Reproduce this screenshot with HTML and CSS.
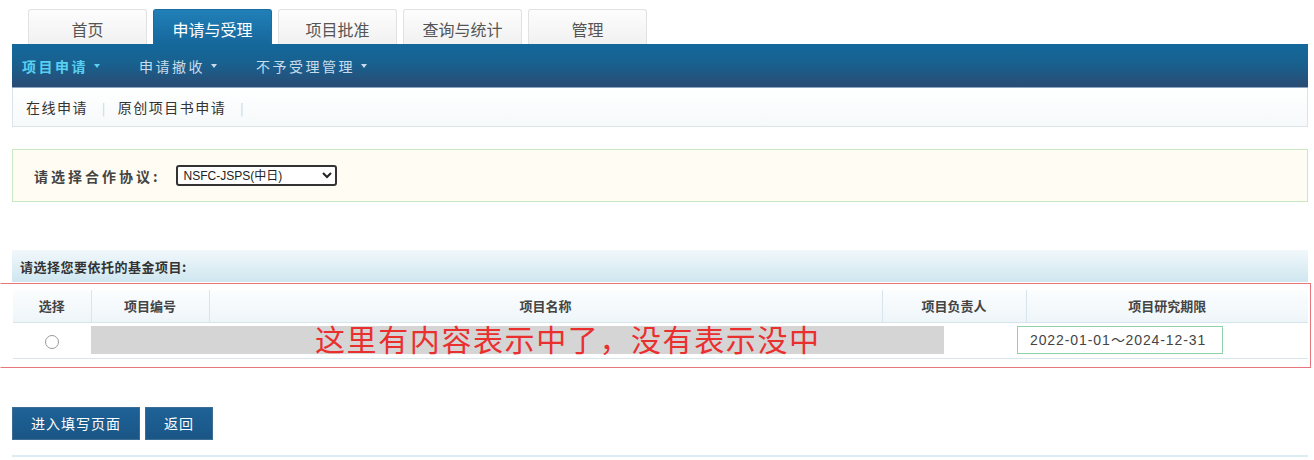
FILE: index.html
```html
<!DOCTYPE html>
<html lang="zh-CN">
<head>
    <meta charset="UTF-8">
    <title>申请与受理</title>
    <link rel="stylesheet" href="styles.css">
</head>
<body>
    <div class="page">
        <ul class="tabs">
            <li class="tab">首页</li>
            <li class="tab active">申请与受理</li>
            <li class="tab">项目批准</li>
            <li class="tab">查询与统计</li>
            <li class="tab">管理</li>
        </ul>
        <div class="main-nav">
            <a class="nav-item current">项目申请<span class="caret"></span></a>
            <a class="nav-item">申请撤收<span class="caret"></span></a>
            <a class="nav-item">不予受理管理<span class="caret"></span></a>
        </div>
        <div class="sub-nav">
            <a>在线申请</a><span class="sep">|</span><a>原创项目书申请</a><span class="sep">|</span>
        </div>

        <div class="agreement-box">
            <label>请选择合作协议:</label>
            <select class="agreement-select">
                <option>NSFC-JSPS(中日)</option>
            </select>
        </div>

        <div class="section-title">请选择您要依托的基金项目:</div>
        <div class="annotate">
            <table class="project-table">
                <thead>
                    <tr>
                        <th class="col-select">选择</th>
                        <th class="col-no">项目编号</th>
                        <th class="col-name">项目名称</th>
                        <th class="col-leader">项目负责人</th>
                        <th class="col-period">项目研究期限</th>
                    </tr>
                </thead>
                <tbody>
                    <tr>
                        <td class="col-select"><span class="radio"></span></td>
                        <td colspan="3" class="masked-cell">
                            <div class="masked">
                                <div class="gray-bar"></div>
                                <span class="note">这里有内容表示中了，没有表示没中</span>
                            </div>
                        </td>
                        <td class="col-period"><span class="period">2022-01-01～2024-12-31</span></td>
                    </tr>
                </tbody>
            </table>
        </div>

        <div class="actions">
            <button class="btn">进入填写页面</button>
            <button class="btn">返回</button>
        </div>
        <div class="bottom-line"></div>
    </div>
</body>
</html>
```

FILE: styles.css
```css
* {
    margin: 0;
    padding: 0;
    box-sizing: border-box;
}

body {
    font-family: "Noto Sans CJK SC", "Liberation Sans", sans-serif;
    background: #fff;
    color: #333;
    width: 1314px;
    height: 460px;
    overflow: hidden;
}

.page {
    padding: 9px 6px 0 12px;
}

/* 顶部标签 */
.tabs {
    list-style: none;
    display: flex;
    gap: 6px;
    margin-left: 16px;
    height: 35px;
}

.tab {
    width: 119px;
    height: 35px;
    line-height: 38px;
    text-align: center;
    font-size: 16px;
    color: #555;
    border: 1px solid #e2e2e2;
    border-bottom: none;
    border-radius: 3px 3px 0 0;
    background: linear-gradient(#fdfdfd, #f1f1f1);
}

.tab.active {
    color: #fff;
    border-color: #1a6da3;
    background: linear-gradient(#2180b8, #16679b);
}

/* 蓝色主导航 */
.main-nav {
    height: 44px;
    display: flex;
    align-items: center;
    padding-left: 10px;
    background: linear-gradient(#14689b 0%, #18618f 45%, #2a4b74 100%);
    border-bottom: 1px solid #8aa6c0;
}

.nav-item {
    font-size: 14px;
    letter-spacing: 2.5px;
    color: #c9dcec;
    margin-right: 39px;
    display: flex;
    align-items: center;
}

.nav-item.current {
    color: #59d0f2;
    font-weight: bold;
}

.caret {
    display: inline-block;
    margin-left: 6px;
    border-left: 3.5px solid transparent;
    border-right: 3.5px solid transparent;
    border-top: 4px solid currentColor;
}

.sub-nav {
    height: 39px;
    display: flex;
    align-items: center;
    padding-left: 13px;
    font-size: 14px;
    letter-spacing: 1.5px;
    color: #333;
    border: 1px solid #dde3e8;
    border-top: none;
    background: linear-gradient(#fff, #f6f9fa);
}

.sub-nav .sep {
    color: #ccc;
    margin: 0 11px 0 14px;
    font-size: 12px;
}

/* 合作协议 */
.agreement-box {
    margin-top: 22px;
    height: 53px;
    display: flex;
    align-items: center;
    padding-left: 21px;
    background: #fffdf3;
    border: 1px solid #c9e7c2;
}

.agreement-box label {
    font-size: 14px;
    letter-spacing: 3px;
    font-weight: bold;
    color: #444;
    margin-right: 15px;
}

.agreement-select {
    width: 161px;
    height: 21px;
    font-family: "Liberation Sans", "Noto Sans CJK SC", sans-serif;
    font-size: 12px;
    color: #222;
    border: 2px solid #333;
    border-radius: 3px;
    background: #fff;
    padding-left: 2px;
}

/* 基金项目 */
.section-title {
    margin-top: 48px;
    height: 32px;
    line-height: 34px;
    padding-left: 8px;
    font-size: 13px;
    letter-spacing: 0.5px;
    font-weight: bold;
    color: #333;
    background: linear-gradient(#f1f8fb, #cfe6f0);
}

.annotate {
    margin: 1px -3px 0 -12px;
    padding: 6px 2px 8px 12px;
    border: 1px solid #e8757a;
    border-left-color: transparent;
}

.project-table {
    width: 100%;
    border-collapse: collapse;
    font-size: 13px;
}

.project-table th {
    height: 32px;
    font-weight: bold;
    color: #444;
    background: linear-gradient(#fbfdfe, #eef5f9);
    border-right: 1px solid #d9e5ec;
    border-bottom: 1px solid #d9e5ec;
}

.project-table td {
    height: 35px;
    border-bottom: 1px solid #d9e5ec;
}

.col-select { width: 78px; text-align: center; }
.col-no { width: 118px; }
.col-leader { width: 144px; }
.col-period { width: 282px; }

.project-table th.col-period { border-right: none; }

.radio {
    display: inline-block;
    width: 14px;
    height: 14px;
    border: 1px solid #999;
    border-radius: 50%;
    background: #fff;
    vertical-align: middle;
}

.masked-cell {
    padding: 0;
}

.masked {
    display: flex;
    align-items: center;
    height: 35px;
}

.gray-bar {
    width: 853px;
    height: 28px;
    background: #d5d5d5;
}

.note {
    position: absolute;
    margin-left: 224px;
    margin-top: -4px;
    font-size: 30px;
    letter-spacing: 1.6px;
    color: #ea2f2f;
}

.project-table td.col-period {
    padding-left: 0;
}

.period {
    display: inline-block;
    margin-left: -9px;
    width: 206px;
    height: 28px;
    line-height: 27px;
    padding-left: 12px;
    font-family: "Liberation Sans", sans-serif;
    font-size: 14px;
    letter-spacing: 0.9px;
    color: #444;
    border: 1px solid #8fd1a8;
    background: #fff;
}

/* 按钮 */
.actions {
    margin-top: 39px;
    display: flex;
    gap: 5px;
}

.btn {
    height: 33px;
    padding: 0 18px;
    font-family: "Noto Sans CJK SC", sans-serif;
    font-size: 14px;
    letter-spacing: 1px;
    color: #fff;
    border: 1px solid #3c6e95;
    background: linear-gradient(#1e6297, #1a5686);
    cursor: pointer;
}

.bottom-line {
    margin-top: 15px;
    height: 2px;
    background: #dcecf4;
}
```
